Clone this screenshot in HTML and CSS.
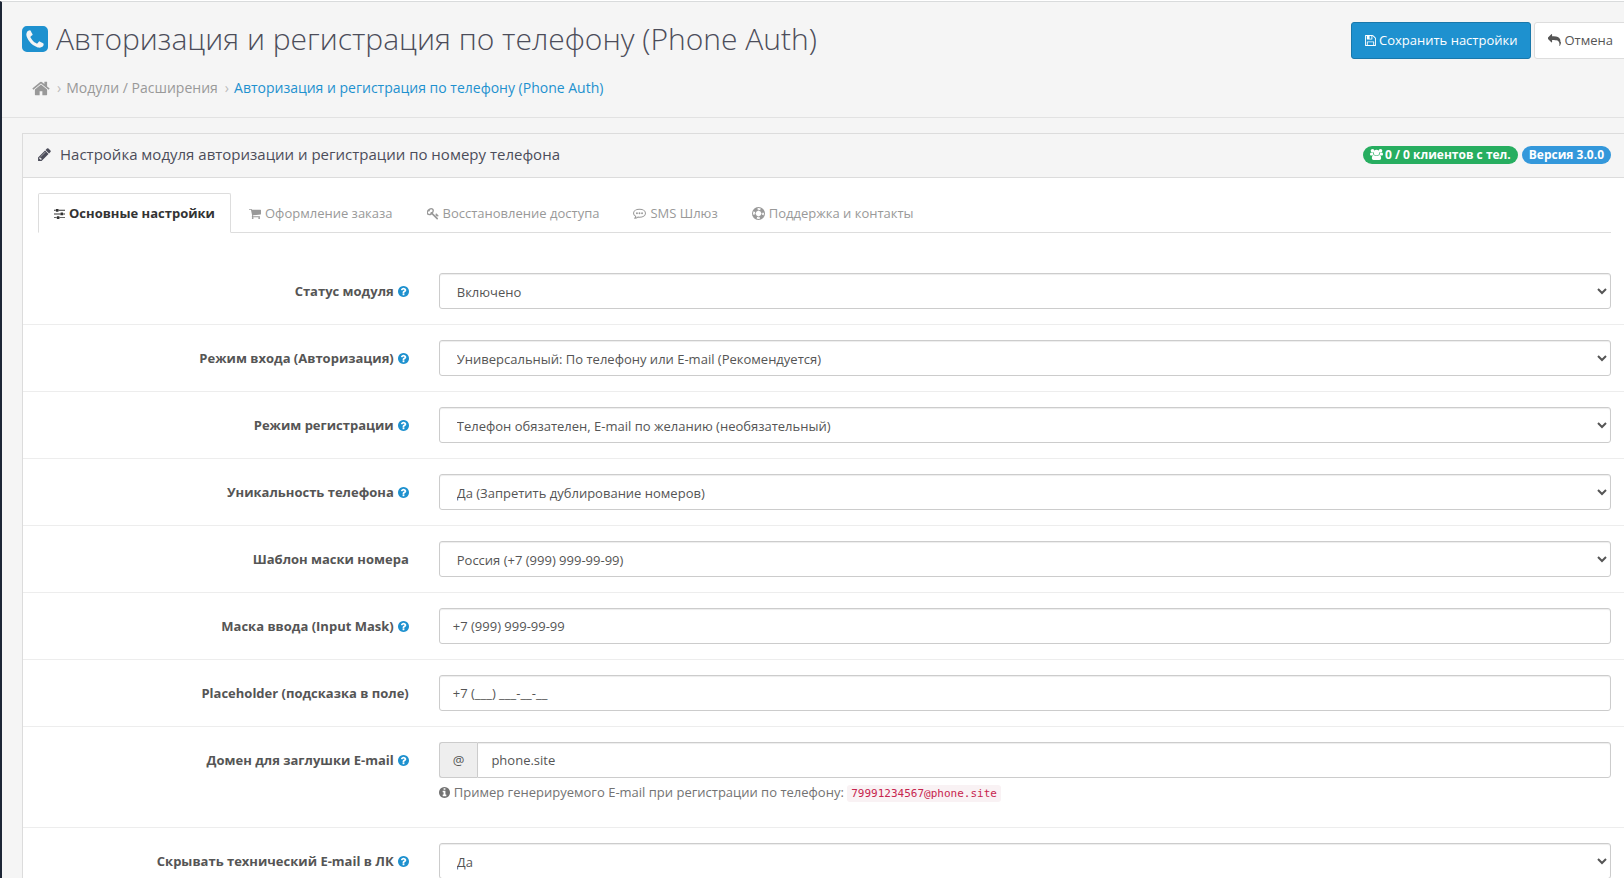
FILE: index.html
```html
<!DOCTYPE html>
<html lang="ru">
<head>
  <meta charset="UTF-8" />
  <meta name="viewport" content="width=device-width, initial-scale=1.0"/>
  <title>Авторизация и регистрация по телефону (Phone Auth)</title>
  <link rel="stylesheet" href="styles.css">
</head>
<body>
  <!-- icon set -->
  <svg class="icon-set" aria-hidden="true">
    <symbol id="i-phone" viewBox="128 128 1536 1536"><path d="M1408 1193q0-11-2-16t-18-16.500-40.500-25-47.500-26.500-45.500-25-28.500-15q-5-3-19-13t-25-15-21-5q-15 0-36.500 20.500t-39.500 45-38.500 45-33.500 20.500q-7 0-16.500-3.500t-15.500-6.500-17-9.500-14-8.500q-99-55-170-126.500t-127-170.500q-2-3-8.500-14t-9.500-17-6.500-15.500-3.500-16.500q0-13 20.500-33.500t45-38.500 45-39.500 20.500-36.500q0-10-5-21t-15-25-13-19q-3-6-15-28.500t-25-45.500-26.500-47.500-25-40.500-16.500-18-16-2q-48 0-101 22-46 21-80 94.500t-34 130.500q0 16 2.500 34t5 30.500 9 33 10 29.500 12.500 33 11 30q60 164 216.500 320.500t320.500 216.500q6 2 30 11t33 12.500 29.500 10 33 9 30.500 5 34 2.500q57 0 130.500-34t94.500-80q22-53 22-101zm256-777v960q0 119-84.500 203.500t-203.500 84.500h-960q-119 0-203.500-84.500t-84.500-203.500v-960q0-119 84.500-203.500t203.500-84.500h960q119 0 203.500 84.500t84.500 203.500z"/></symbol>
    <symbol id="i-save" viewBox="128 0 1536 1792"><path d="M512 1536h768v-384h-768v384zm896 0h128v-896q0-14-10-38.500t-20-34.500l-281-281q-10-10-34-20t-39-10v416q0 40-28 68t-68 28h-576q-40 0-68-28t-28-68v-416h-128v1280h128v-416q0-40 28-68t68-28h832q40 0 68 28t28 68v416zm-384-928v-320q0-13-9.500-22.500t-22.500-9.500h-192q-13 0-22.500 9.500t-9.500 22.500v320q0 13 9.500 22.500t22.500 9.500h192q13 0 22.500-9.500t9.500-22.500zm640 32v928q0 40-28 68t-68 28h-1344q-40 0-68-28t-28-68v-1344q0-40 28-68t68-28h928q40 0 88 20t76 48l280 280q28 28 48 76t20 88z"/></symbol>
    <symbol id="i-reply" viewBox="0 0 1792 1792"><path d="M1792 1120q0 166-127 451-3 7-10.500 24t-13.500 30-13 22q-12 17-28 17-15 0-23.500-10t-8.500-25q0-9 2.500-26.500t2.500-23.500q5-68 5-123 0-112-19.500-200.500t-54-153.500-89-112-117.500-79-146.500-44-169-22.500-195.500-6.500h-224v256q0 26-19 45t-45 19-45-19l-512-512q-19-19-19-45t19-45l512-512q19-19 45-19t45 19 19 45v256h224q713 0 875 403 53 134 53 333z"/></symbol>
    <symbol id="i-home" viewBox="64 0 1664 1792"><path d="M1472 992v480q0 26-19 45t-45 19h-384v-384h-256v384h-384q-26 0-45-19t-19-45v-480q0-1 .5-3t.5-3l575-474 575 474q1 2 1 6zm223-69l-62 74q-8 9-21 11h-3q-13 0-21-7l-692-577-692 577q-12 8-24 7-13-2-21-11l-62-74q-8-10-7-23.500t11-21.500l719-599q32-26 76-26t76 26l244 204v-195q0-14 9-23t23-9h192q14 0 23 9t9 23v408l219 182q10 8 11 21.500t-7 23.500z"/></symbol>
    <symbol id="i-pencil" viewBox="128 0 1536 1792"><path d="M491 1536l91-91-235-235-91 91v107h128v128h107zm523-928q0-22-22-22-10 0-17 7l-542 542q-7 7-7 17 0 22 22 22 10 0 17-7l542-542q7-7 7-17zm-54-192l416 416-832 832h-416v-416zm683 96q0 53-37 90l-166 166-416-416 166-165q36-38 90-38 53 0 91 38l235 234q37 39 37 91z"/></symbol>
    <symbol id="i-users" viewBox="0 0 1792 1792"><circle cx="350" cy="390" r="256"/><circle cx="1442" cy="390" r="256"/><circle cx="896" cy="640" r="384"/><path d="M0 900q0-250 150-270 100 80 260 70 20 150 110 230-120 10-200 100H130Q0 1020 0 900zM1792 900q0-250-150-270-100 80-260 70-20 150-110 230 120 10 200 100h190q130-10 130-130zM256 1430q0-430 270-470 160 130 370 130t370-130q270 40 270 470 0 234-240 234H496q-240 0-240-234z"/></symbol>
    <symbol id="i-sliders" viewBox="128 0 1536 1792"><path d="M480 1408v128h-352v-128h352zm352-128q26 0 45 19t19 45v256q0 26-19 45t-45 19h-256q-26 0-45-19t-19-45v-256q0-26 19-45t45-19h256zm160-384v128h-864v-128h864zm-640-512v128h-224v-128h224zm1312 1024v128h-736v-128h736zm-960-1152q26 0 45 19t19 45v256q0 26-19 45t-45 19h-256q-26 0-45-19t-19-45v-256q0-26 19-45t45-19h256zm640 512q26 0 45 19t19 45v256q0 26-19 45t-45 19h-256q-26 0-45-19t-19-45v-256q0-26 19-45t45-19h256zm320 128v128h-224v-128h224zm0-512v128h-864v-128h864z"/></symbol>
    <symbol id="i-cart" viewBox="64 0 1664 1792"><path d="M704 1536q0 52-38 90t-90 38-90-38-38-90 38-90 90-38 90 38 38 90zm896 0q0 52-38 90t-90 38-90-38-38-90 38-90 90-38 90 38 38 90zm128-1088v512q0 24-16.500 42.500t-40.500 21.500l-1044 122q13 60 13 70 0 16-24 64h920q26 0 45 19t19 45-19 45-45 19h-1024q-26 0-45-19t-19-45q0-11 8-31.500t16-36 21.500-40 15.500-29.500l-177-823h-204q-26 0-45-19t-19-45 19-45 45-19h256q16 0 28.500 6.500t19.500 15.500 13 24.500 8 26 5.500 29.500 4.500 26h1201q26 0 45 19t19 45z"/></symbol>
    <symbol id="i-key" viewBox="64 0 1664 1792"><path d="M832 512q0-80-56-136t-136-56-136 56-56 136q0 42 19 83-41-19-83-19-80 0-136 56t-56 136 56 136 136 56 136-56 56-136q0-42-19-83 41 19 83 19 80 0 136-56t56-136zm851 704q0 17-49 66t-66 49q-9 0-28.500-16t-36.500-33-38.500-40-24.500-26l-96 96 220 220q28 28 28 68 0 42-39 81t-81 39q-40 0-68-28l-671-671q-176 131-365 131-163 0-265.500-102.500t-102.500-265.500q0-160 95-313t248-248 313-95q163 0 265.500 102.500t102.500 265.500q0 189-131 365l355 355 96-96q-3-3-26-24.500t-40-38.500-33-36.500-16-28.500q0-17 49-66t66-49q13 0 23 10 6 6 46 44.500t82 79.500 86.500 86 73 78 28.500 41z"/></symbol>
    <symbol id="i-comment" viewBox="0 0 1792 1792"><path fill="none" stroke="currentColor" stroke-width="144" stroke-linejoin="round" d="M896 320c-460 0-824 240-824 544 0 180 120 330 310 430-20 110-70 190-150 270 180-20 330-90 440-180 75 15 142 24 224 24 460 0 824-240 824-544s-364-544-824-544z"/><circle cx="544" cy="864" r="128"/><circle cx="896" cy="864" r="128"/><circle cx="1248" cy="864" r="128"/></symbol>
    <symbol id="i-ring" viewBox="0 0 1792 1792"><g fill="none" stroke="currentColor"><circle cx="896" cy="896" r="824" stroke-width="144"/><circle cx="896" cy="896" r="448" stroke-width="128"/><circle cx="896" cy="896" r="640" stroke-width="400" stroke-dasharray="585 420" stroke-dashoffset="-210"/></g></symbol>
    <symbol id="i-help" viewBox="128 0 1536 1792"><path d="M1024 1376v-192q0-14-9-23t-23-9h-192q-14 0-23 9t-9 23v192q0 14 9 23t23 9h192q14 0 23-9t9-23zm256-672q0-88-55.500-163t-138.500-116-170-41q-243 0-371 213-15 24 8 42l132 100q7 6 19 6 16 0 25-12 53-68 86-92 34-24 86-24 48 0 85.500 26t37.500 59q0 38-20 61t-68 45q-63 28-115.500 86.500t-52.500 125.500v36q0 14 9 23t23 9h192q14 0 23-9t9-23q0-19 21.500-49.500t54.500-49.500q32-18 49-28.500t46-35 44.500-48 28-60.500 12.500-81zm384 192q0 209-103 385.500t-279.500 279.500-385.500 103-385.500-103-279.500-279.500-103-385.500 103-385.500 279.500-279.500 385.500-103 385.500 103 279.500 279.500 103 385.500z"/></symbol>
    <symbol id="i-info" viewBox="128 0 1536 1792"><path d="M1152 1376v-160q0-14-9-23t-23-9h-96v-512q0-14-9-23t-23-9h-320q-14 0-23 9t-9 23v160q0 14 9 23t23 9h96v320h-96q-14 0-23 9t-9 23v160q0 14 9 23t23 9h448q14 0 23-9t9-23zm-128-896v-160q0-14-9-23t-23-9h-192q-14 0-23 9t-9 23v160q0 14 9 23t23 9h192q14 0 23-9t9-23zm640 416q0 209-103 385.500t-279.500 279.500-385.500 103-385.500-103-279.500-279.500-103-385.500 103-385.500 279.500-279.500 385.500-103 385.500 103 279.500 279.500 103 385.500z"/></symbol>
  </svg>

  <div class="content">
    <header class="page-header">
      <div class="heading">
        <h1><svg class="icon-title"><use href="#i-phone"/></svg>Авторизация и регистрация по телефону (Phone Auth)</h1>
        <nav class="breadcrumb">
          <a href="#" aria-label="Главная"><svg class="icon-home"><use href="#i-home"/></svg></a>
          <span class="sep">›</span>
          <a href="#">Модули / Расширения</a>
          <span class="sep">›</span>
          <a href="#" class="current">Авторизация и регистрация по телефону (Phone Auth)</a>
        </nav>
      </div>
      <div class="actions">
        <button type="submit" form="settings" class="btn btn-primary"><svg class="icon"><use href="#i-save"/></svg>Сохранить настройки</button>
        <button type="button" class="btn btn-default"><svg class="icon icon-wide"><use href="#i-reply"/></svg>Отмена</button>
      </div>
    </header>

    <div class="panel">
      <div class="panel-heading">
        <h3><svg class="icon-pencil"><use href="#i-pencil"/></svg>Настройка модуля авторизации и регистрации по номеру телефона</h3>
        <div class="badges">
          <span class="badge badge-green"><svg class="icon icon-wide"><use href="#i-users"/></svg>0 / 0 клиентов с тел.</span>
          <span class="badge badge-blue">Версия 3.0.0</span>
        </div>
      </div>

      <div class="panel-body">
        <nav class="tabs">
          <a href="#" class="tab active"><svg class="icon"><use href="#i-sliders"/></svg>Основные настройки</a>
          <a href="#" class="tab"><svg class="icon icon-mid"><use href="#i-cart"/></svg>Оформление заказа</a>
          <a href="#" class="tab"><svg class="icon icon-mid"><use href="#i-key"/></svg>Восстановление доступа</a>
          <a href="#" class="tab"><svg class="icon icon-wide"><use href="#i-comment"/></svg>SMS Шлюз</a>
          <a href="#" class="tab"><svg class="icon icon-wide"><use href="#i-ring"/></svg>Поддержка и контакты</a>
        </nav>

        <form id="settings">
          <div class="form-group">
            <label for="status">Статус модуля<svg class="icon icon-help"><use href="#i-help"/></svg></label>
            <div class="field">
              <select id="status" class="form-control"><option>Включено</option></select>
            </div>
          </div>
          <div class="form-group">
            <label for="loginMode">Режим входа (Авторизация)<svg class="icon icon-help"><use href="#i-help"/></svg></label>
            <div class="field">
              <select id="loginMode" class="form-control"><option>Универсальный: По телефону или E-mail (Рекомендуется)</option></select>
            </div>
          </div>
          <div class="form-group">
            <label for="registerMode">Режим регистрации<svg class="icon icon-help"><use href="#i-help"/></svg></label>
            <div class="field">
              <select id="registerMode" class="form-control"><option>Телефон обязателен, E-mail по желанию (необязательный)</option></select>
            </div>
          </div>
          <div class="form-group">
            <label for="unique">Уникальность телефона<svg class="icon icon-help"><use href="#i-help"/></svg></label>
            <div class="field">
              <select id="unique" class="form-control"><option>Да (Запретить дублирование номеров)</option></select>
            </div>
          </div>
          <div class="form-group">
            <label for="template">Шаблон маски номера</label>
            <div class="field">
              <select id="template" class="form-control"><option>Россия (+7 (999) 999-99-99)</option></select>
            </div>
          </div>
          <div class="form-group">
            <label for="mask">Маска ввода (Input Mask)<svg class="icon icon-help"><use href="#i-help"/></svg></label>
            <div class="field">
              <input type="text" id="mask" class="form-control" value="+7 (999) 999-99-99">
            </div>
          </div>
          <div class="form-group">
            <label for="hint">Placeholder (подсказка в поле)</label>
            <div class="field">
              <input type="text" id="hint" class="form-control" value="+7 (___) ___-__-__">
            </div>
          </div>
          <div class="form-group">
            <label for="domain">Домен для заглушки E-mail<svg class="icon icon-help"><use href="#i-help"/></svg></label>
            <div class="field">
              <div class="input-group">
                <span class="addon">@</span>
                <input type="text" id="domain" class="form-control" value="phone.site">
              </div>
              <p class="help-block"><svg class="icon"><use href="#i-info"/></svg>Пример генерируемого E-mail при регистрации по телефону: <code>79991234567@phone.site</code></p>
            </div>
          </div>
          <div class="form-group">
            <label for="hideEmail">Скрывать технический E-mail в ЛК<svg class="icon icon-help"><use href="#i-help"/></svg></label>
            <div class="field">
              <select id="hideEmail" class="form-control"><option>Да</option></select>
            </div>
          </div>
        </form>
      </div>
    </div>
  </div>
</body>
</html>
```
FILE: styles.css
```css
* {
  box-sizing: border-box;
}

html {
  overflow: hidden auto;
  scrollbar-width: none;
}

body {
  margin: 0;
  font-family: "Open Sans", "Noto Sans", sans-serif;
  font-size: 13px;
  line-height: 20px;
  color: #666;
  background: #f5f5f5;
  border-top: 1px solid #fff;
}

a {
  color: #999;
  text-decoration: none;
}

svg {
  fill: currentColor;
}

.icon-set {
  display: none;
}

.icon {
  width: 11px;
  height: 13px;
  margin-right: 4px;
  vertical-align: -2px;
}

.icon-mid {
  width: 12px;
}

.icon-wide {
  width: 13px;
}

/* the content runs a little past the right edge of the window */
.content {
  margin-right: -3px;
  border-top: 1px solid #d9dbdc;
  border-left: 2px solid #1d2636;
}

.page-header {
  display: flex;
  justify-content: space-between;
  align-items: flex-start;
  padding: 20px 0 19px 20px;
  border-bottom: 1px solid #e2e2e2;
}

h1 {
  display: flex;
  align-items: center;
  gap: 8px;
  margin: 0;
  font-size: 30px;
  font-weight: 300;
  line-height: 34px;
  color: #4c4d5a;
}

.icon-title {
  width: 26px;
  height: 26px;
  color: #1e91cf;
}

.breadcrumb {
  display: flex;
  align-items: center;
  gap: 5px;
  margin-top: 22px;
  padding-left: 10px;
  font-size: 14px;
  line-height: 20px;
}

.breadcrumb .current {
  color: #1e91cf;
}

.icon-home {
  display: block;
  width: 18px;
  height: 19px;
}

.sep {
  margin-left: 2px;
  color: #bbb;
}

.actions {
  display: flex;
  gap: 3px;
}

.btn {
  padding: 8px 13px;
  border: 1px solid #ddd;
  border-radius: 3px;
  font: inherit;
  line-height: 19px;
  cursor: pointer;
}

.btn .icon {
  margin-right: 3px;
}

.btn-primary {
  color: #fff;
  background: #1e91cf;
  border-color: #1978ab;
}

.btn-default {
  color: #555;
  background: #fff;
}

.panel {
  margin: 15px 0 0 20px;
  background: #fff;
  border: 1px solid #dcdcdc;
}

.panel-heading {
  display: flex;
  justify-content: space-between;
  align-items: center;
  padding: 10px 15px 12px;
  background: #f5f5f5;
  border-bottom: 1px solid #dcdcdc;
}

h3 {
  display: flex;
  align-items: center;
  gap: 9px;
  margin: 0;
  font-size: 15px;
  font-weight: 400;
  line-height: 21px;
  color: #4c4d5a;
}

.icon-pencil {
  width: 13px;
  height: 15px;
}

.badges {
  display: flex;
  gap: 4px;
}

.badge {
  padding: 0 7px;
  border-radius: 10px;
  font-size: 12px;
  font-weight: 700;
  line-height: 18px;
  color: #fff;
}

.badge .icon {
  margin-right: 2px;
}

.badge-green {
  background: #27ae60;
}

.badge-blue {
  background: #3498db;
}

.panel-body {
  padding: 15px;
}

.tabs {
  display: flex;
  gap: 2px;
  margin-bottom: 25px;
  border-bottom: 1px solid #ddd;
}

.tab {
  margin-bottom: -1px;
  padding: 9px 15px;
  border: 1px solid transparent;
  border-radius: 2px 2px 0 0;
}

.tab.active {
  font-weight: 700;
  color: #333;
  background: #fff;
  border-color: #ddd;
  border-bottom-color: #fff;
}

.form-group {
  display: grid;
  grid-template-columns: 1fr 3fr;
  margin: 0 -15px;
  padding: 15px 0;
}

.form-group + .form-group {
  border-top: 1px solid #ededed;
}

label {
  padding: 8px 15px;
  font-weight: 700;
  text-align: right;
  color: #555;
}

.icon-help {
  margin: 0 0 0 4px;
  color: #1e91cf;
}

.field {
  padding: 0 15px;
}

.form-control {
  display: block;
  width: 100%;
  height: 36px;
  padding: 8px 13px;
  border: 1px solid #ccc;
  border-radius: 3px;
  font: inherit;
  color: #555;
  background: #fff;
  box-shadow: inset 0 1px 1px rgba(0,0,0,0.075);
}

.input-group {
  display: flex;
}

.input-group .form-control {
  flex: 1;
  border-radius: 0 3px 3px 0;
}

.addon {
  padding: 7px 13px;
  border: 1px solid #ccc;
  border-right: 0;
  border-radius: 3px 0 0 3px;
  color: #555;
  background: #eee;
}

.help-block {
  margin: 4px 0 8px;
  color: #737373;
}

code {
  padding: 2px 4px;
  border-radius: 3px;
  font-family: "DejaVu Sans Mono", monospace;
  font-size: 11px;
  color: #c7254e;
  background: #f9f2f4;
}
```
